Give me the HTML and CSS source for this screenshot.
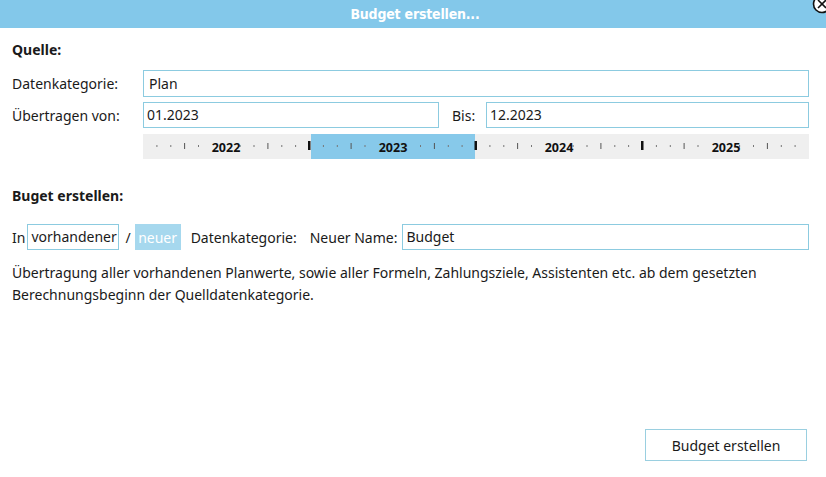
FILE: index.html
```html
<!DOCTYPE html>
<html lang="de">
<head>
<meta charset="utf-8">
<title>Budget erstellen...</title>
<link rel="stylesheet" href="styles.css">
</head>
<body>
<div class="window">
  <header class="titlebar">
    <span class="title">Budget erstellen...</span>
    <svg class="close" width="20" height="20" viewBox="0 0 20 20">
      <circle cx="10" cy="6" r="8.5" fill="#ffffff" stroke="#111111" stroke-width="1.6"/>
      <path d="M6 2 L14 10 M14 2 L6 10" stroke="#111111" stroke-width="1.6"/>
    </svg>
  </header>
  <main class="content">
    <h2 class="section">Quelle:</h2>
    <div class="row">
      <span class="label">Datenkategorie:</span>
      <div class="field grow pad5">Plan</div>
    </div>
    <div class="row">
      <span class="label">Übertragen von:</span>
      <div class="field from">01.2023</div>
      <span class="bis">Bis:</span>
      <div class="field grow">12.2023</div>
    </div>
    <div class="row">
      <span class="label"></span>
      <svg class="timeline" width="666" height="25" viewBox="0 0 666 25" id="tl">
        <rect x="0" y="0" width="666" height="25" fill="#efefef"/>
        <rect x="168" y="0" width="164" height="25" fill="#87c9ea"/>
        <g id="ticks"></g>
        <g font-family="'Open Sans', 'DejaVu Sans', sans-serif" font-size="12.5" font-weight="700" fill="#111" text-anchor="middle">
          <text x="83" y="17.5">2022</text>
          <text x="250" y="17.5">2023</text>
          <text x="416" y="17.5">2024</text>
          <text x="583" y="17.5">2025</text>
        </g>
      </svg>
    </div>
    <h2 class="section second">Buget erstellen:</h2>
    <div class="row inrow">
      <span>In</span>
      <div class="field small">vorhandener</div>
      <span class="slash">/</span>
      <div class="toggle">neuer</div>
      <span class="dk">Datenkategorie:</span>
      <span class="nn">Neuer Name:</span>
      <div class="field grow">Budget</div>
    </div>
    <p class="desc">Übertragung aller vorhandenen Planwerte, sowie aller Formeln, Zahlungsziele, Assistenten etc. ab dem gesetzten Berechnungsbeginn der Quelldatenkategorie.</p>
  </main>
  <footer class="footer">
    <button class="btn">Budget erstellen</button>
  </footer>
</div>
<script>
(function(){
  var g = document.getElementById('ticks');
  var ns = 'http://www.w3.org/2000/svg';
  var step = 666/48;
  for (var k = 1; k < 48; k++) {
    var m = k % 12;
    if (m === 5 || m === 6) continue;
    var x = k * step;
    var r = document.createElementNS(ns, 'rect');
    if (m === 0) {
      r.setAttribute('x', (x - 1.5).toFixed(1)); r.setAttribute('y', 7);
      r.setAttribute('width', 2.5); r.setAttribute('height', 9);
      r.setAttribute('fill', '#111');
    } else if (m === 3 || m === 9) {
      r.setAttribute('x', (x - 0.5).toFixed(1)); r.setAttribute('y', 9);
      r.setAttribute('width', 1); r.setAttribute('height', 6);
      r.setAttribute('fill', '#555');
    } else {
      r.setAttribute('x', (x - 0.5).toFixed(1)); r.setAttribute('y', 11);
      r.setAttribute('width', 1); r.setAttribute('height', 2);
      r.setAttribute('fill', '#777');
    }
    g.appendChild(r);
  }
})();
</script>
</body>
</html>
```
FILE: styles.css
```css
html, body {
  margin: 0;
  padding: 0;
  background: #ffffff;
}
body {
  font-family: "Noto Sans", "Open Sans", sans-serif;
  font-size: 14px;
  color: #1a1a1a;
}
.window {
  width: 826px;
  height: 477px;
  display: flex;
  flex-direction: column;
  overflow: hidden;
}
.titlebar {
  position: relative;
  height: 28px;
  background: #83c8ea;
  display: flex;
  align-items: center;
  justify-content: center;
}
.title {
  color: #ffffff;
  font-family: "DejaVu Sans Condensed", "DejaVu Sans", sans-serif;
  font-weight: 700;
  font-size: 14px;
  letter-spacing: -0.2px;
  margin-left: 4px;
}
.close {
  position: absolute;
  right: -6px;
  top: -2px;
}
.content {
  padding: 0 17px 0 12px;
  display: flex;
  flex-direction: column;
}
.section {
  margin: 12px 0 0 0;
  font-size: 14px;
  font-weight: 700;
  line-height: 20px;
  height: 20px;
}
.section.second {
  margin-top: 27px;
  margin-bottom: 8px;
}
.row {
  display: flex;
  align-items: center;
  margin-top: 5px;
}
.section + .row { margin-top: 10px; }
.label {
  width: 131px;
  flex: none;
}
.field {
  box-sizing: border-box;
  height: 26px;
  border: 1px solid #8ccbe0;
  background: #ffffff;
  padding: 0 3px;
  display: flex;
  align-items: center;
  line-height: 20px;
}
.field.pad5 { padding-left: 5px; height: 27px; }
.grow { flex: 1; }
.from { width: 296px; }
.bis { width: 34px; margin-left: 13px; }
.timeline { display: block; margin-top: 1px; }
.small {
  margin-left: 2px;
  width: 92px;
}
.slash { margin-left: 6px; }
.toggle {
  box-sizing: border-box;
  height: 26px;
  margin-left: 4px;
  width: 46px;
  background: #a6d8ee;
  color: #ffffff;
  display: flex;
  align-items: center;
  justify-content: center;
}
.dk { margin-left: 10px; }
.nn { margin-left: 13px; margin-right: 5px; }
.desc {
  margin: 12px 0 0 0;
  line-height: 22px;
}
.footer {
  margin-top: auto;
  display: flex;
  justify-content: flex-end;
  padding: 0 19px 16px 0;
}
.btn {
  box-sizing: border-box;
  width: 162px;
  height: 32px;
  background: #ffffff;
  border: 1px solid #9acfe0;
  font-family: "Noto Sans", "Open Sans", sans-serif;
  font-size: 14px;
  color: #1a1a1a;
  padding: 0;
}
```
